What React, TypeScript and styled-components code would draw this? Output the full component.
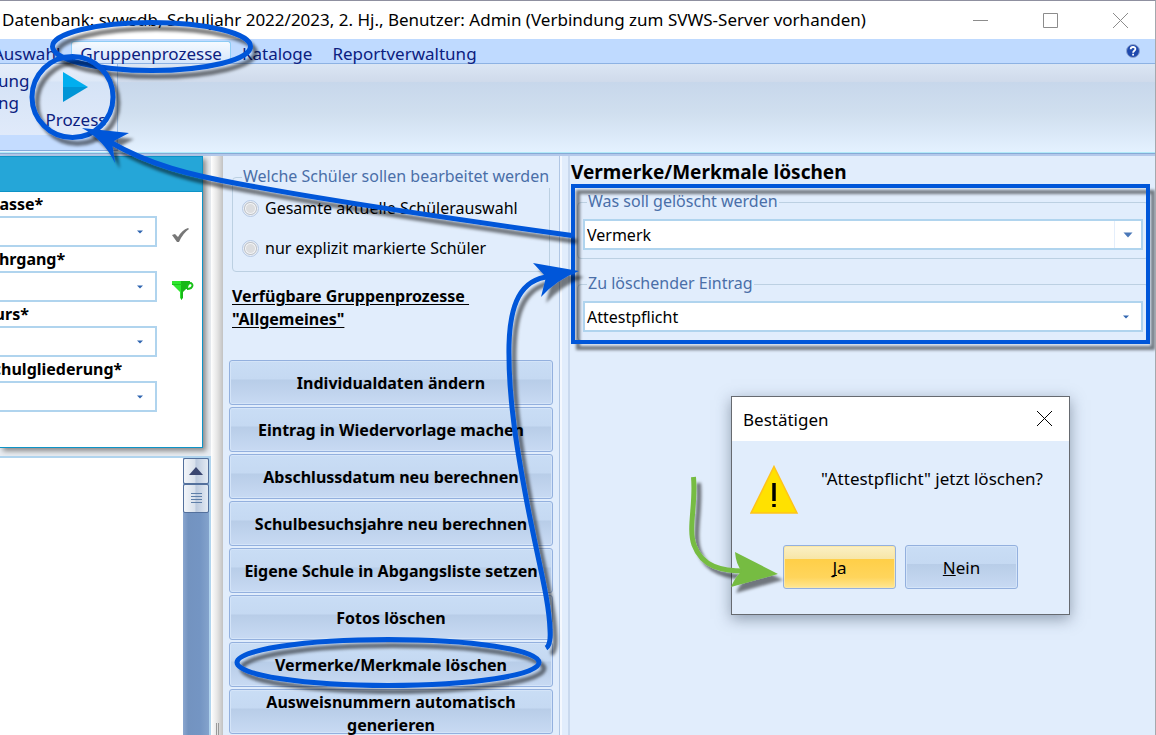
import React from 'react';
import styled, { createGlobalStyle, css } from 'styled-components';

const GlobalStyle = createGlobalStyle`
  *, *::before, *::after { box-sizing: border-box; }
  body { margin: 0; background: #e1edfc; }
  body, button, select, input { font-family: 'Noto Sans', 'Open Sans', sans-serif; }
  body { font-size: 16px; color: #000; }
  button { cursor: pointer; }
  u { text-decoration-skip-ink: none; }
`;

const Window = styled.div`
  position: relative;
  display: flex;
  flex-direction: column;
  height: 100vh;
  overflow: hidden;
  border-top: 1px solid #8f90a0;
  border-right: 1px solid #a5a8ad;
`;

const TitleBar = styled.header`
  display: flex;
  flex: none;
  align-items: center;
  height: 38px;
  background: #fff;
`;

const Title = styled.h1`
  flex: 1;
  margin: 0 0 0 2px;
  font-size: 17px;
  font-weight: 400;
  line-height: 24px;
  white-space: nowrap;
`;

const WindowButton = styled.button`
  display: flex;
  align-items: center;
  justify-content: center;
  width: 70px;
  height: 38px;
  padding: 0;
  border: 0;
  background: none;
  color: #8c8c8c;
`;

const MenuBar = styled.nav`
  display: flex;
  flex: none;
  align-items: stretch;
  gap: 2px;
  height: 25px;
  padding: 2px 0 0;
  background: #bfdaff;
  border-bottom: 1px solid #8db2e3;
`;

const MenuTab = styled.button<{ $active?: boolean; $clipped?: boolean }>`
  padding: 2px 8px 0;
  border: 1px solid transparent;
  border-bottom: 0;
  border-radius: 3px 3px 0 0;
  background: none;
  color: #0b2080;
  font-size: 17px;
  line-height: 20px;
  ${p => p.$active && css`
    border-color: #8fcdf5;
    background: linear-gradient(#f5faff, #d5e6fb);
  `}
  ${p => p.$clipped && css`margin-left: -16px;`}
`;

const HelpButton = styled.button`
  margin: 0 15px 2px auto;
  padding: 0;
  border: 0;
  background: none;
  line-height: 0;
`;

const Ribbon = styled.div`
  flex: none;
  height: 92px;
  background: linear-gradient(#dbe6f4 0, #cfdaeb 18px, #c7d7eb 18px, #d0dfef 50px, #e4f1ff 88px, #b0eaf8 88px, #b0eaf8 89px, #86aad6 89px, #86aad6 90px, #b4c8ea 90px);
`;

const RibbonGroup = styled.div`
  display: flex;
  width: 118px;
  height: 87px;
  border-right: 1px solid #9fbcdf;
  border-bottom: 1px solid #85aadb;
  background: linear-gradient(#e6eefa 0, #dde8f7 17px, #d5e3f6 18px, #e0eafa 71px, #c4dcff 71px);
`;

const RibbonLinks = styled.div`
  width: 36px;
  padding-top: 6px;
  overflow: hidden;
`;

const RibbonLink = styled.button`
  display: block;
  margin-left: -2px;
  padding: 0;
  border: 0;
  background: none;
  color: #0b2080;
  font-size: 17px;
  line-height: 22px;
`;

const RunButton = styled.button`
  display: flex;
  flex-direction: column;
  align-items: center;
  gap: 7px;
  width: 80px;
  padding: 8px 0 0;
  border: 0;
  background: none;
  color: #0b2080;
  font-size: 17px;
  line-height: 22px;
`;

const Body = styled.main`
  display: grid;
  flex: 1;
  grid-template-columns: 211px 12px 336px 11px 1fr;
  min-height: 0;
`;

const LeftColumn = styled.aside`
  display: flex;
  flex-direction: column;
  gap: 8px;
  min-width: 0;
  background: #e9edf2;
`;

const FilterPanel = styled.section`
  width: 203px;
  padding-bottom: 35px;
  border: 1px solid #0d93c6;
  border-left: 0;
  background: #fff;
  box-shadow: 3px 3px 5px #8a8a8a;
`;

const PanelHeader = styled.div`
  height: 35px;
  border-bottom: 1px solid #0d93c6;
  background: #25a6d8;
`;

const FieldClip = styled.div`
  overflow: hidden;
`;

const FilterRow = styled.div`
  display: flex;
  align-items: flex-end;
  gap: 15px;
  margin-left: -16px;
`;

const Field = styled.div`
  width: 173px;
`;

const FieldLabel = styled.label`
  display: block;
  font-weight: 700;
  line-height: 24px;
`;

const ComboFrame = styled.div`
  display: grid;
  grid-template-columns: 1fr 30px;
  height: 31px;
  border: 2px solid #b0d4ee;
  background: #fff;
`;

const ComboSelect = styled.select`
  grid-area: 1 / 1 / 2 / 3;
  width: 100%;
  padding: 0 2px;
  border: 0;
  appearance: none;
  background: none;
  color: #000;
  font-size: 16px;
`;

const ComboArrow = styled.span<{ $divided?: boolean }>`
  display: flex;
  grid-area: 1 / 2;
  align-items: center;
  justify-content: center;
  pointer-events: none;
  ${p => p.$divided && css`
    margin-left: 3px;
    border-left: 1px solid #e4eefb;
  `}
`;

const FilterIcon = styled.span`
  display: flex;
  align-items: center;
  height: 24px;
`;

const ListPane = styled.section`
  display: flex;
  flex: 1;
  justify-content: flex-end;
  border: solid #b0d4ee;
  border-width: 2px 2px 0 0;
  background: #fff;
`;

const ScrollTrack = styled.div`
  display: flex;
  flex-direction: column;
  width: 26px;
  background: linear-gradient(90deg, #8aa6cf, #7393c0 20%, #7495c3 65%, #84a3cc);
`;

const ScrollPart = styled.button<{ $tall?: boolean }>`
  display: flex;
  align-items: center;
  justify-content: center;
  height: ${p => (p.$tall ? 29 : 26)}px;
  padding: 0;
  border: 1px solid #53709c;
  border-radius: 2px;
  background: linear-gradient(90deg, #f2f5f9, #d9e1ec 45%, #bccade 50%, #e3eaf3);
`;

const LeftSplitter = styled.div`
  display: flex;
  align-items: flex-end;
  justify-content: center;
  background: linear-gradient(90deg, #fff, #e6e6e6 50%, #c2c2c2);
`;

const Grip = styled.span`
  width: 3px;
  height: 12px;
  border: solid #999;
  border-width: 0 1px;
`;

const MiddleSplitter = styled.div`
  border: solid #b0c6e4;
  border-width: 0 2px 0 1px;
  border-right-color: #c9d9ee;
  box-shadow: inset 2px 0 #f4f8fe;
`;

const ProcessColumn = styled.section`
  display: flex;
  flex-direction: column;
  padding: 10px 6px 0;
`;

const GroupBox = styled.fieldset<{ $scope?: boolean }>`
  min-width: 0;
  margin: 0;
  border: 1px solid #bcd0e2;
  border-radius: 4px;
  padding: 6px 5px 8px;
  ${p => p.$scope && css`
    margin: 0 3px;
    padding: 0 5px 3px;
  `}
`;

const Legend = styled.legend`
  margin-left: 4px;
  padding: 0 1px 2px;
  background: #e1edfc;
  color: #4a6fa8;
  line-height: 20px;
  white-space: nowrap;
`;

const RadioLabel = styled.label`
  display: flex;
  align-items: center;
  gap: 6px;
  height: 40px;
  padding-left: 4px;
  white-space: nowrap;
`;

const Radio = styled.input`
  width: 17px;
  height: 17px;
  margin: 0;
  appearance: none;
  border: 1px solid #b6c9e4;
  border-radius: 50%;
  background: radial-gradient(circle, #dcdddf 0 4px, #f2f3f5 5px, #bfc3c9 6px, #e9eef6 7px);
`;

const ListHeading = styled.h2`
  margin: 13px 3px 29px;
  font-size: 16px;
  line-height: 23px;
  text-decoration: underline;
  text-underline-offset: 2px;
  white-space: pre;
`;

const ProcessList = styled.div`
  display: flex;
  flex-direction: column;
  gap: 2px;
`;

const bevel = css`
  border: 1px solid #93b0de;
  border-radius: 3px;
  background: linear-gradient(#c9ddf5, #c5d9f2 42%, #b8cde8 44%, #c8daf3);
  box-shadow: inset 0 0 0 1px #d4e4f8;
  color: #000;
`;

const ProcessButton = styled.button`
  ${bevel}
  flex: none;
  height: 45px;
  padding: 1px 8px 0;
  font-size: 16px;
  font-weight: 700;
  line-height: 23px;
`;

const DetailColumn = styled.section`
  min-width: 0;
  padding-left: 1px;
`;

const DetailTitle = styled.h2`
  margin: 0;
  font-size: 19px;
  line-height: 32px;
`;

const DetailFields = styled.div`
  display: flex;
  flex-direction: column;
  gap: 14px;
  padding: 3px 6px 0;
`;

const Dialog = styled.div`
  position: absolute;
  top: 395px;
  left: 731px;
  width: 339px;
  border: 1px solid #666a70;
  background: #e1edfc;
  box-shadow: 0 4px 14px rgba(60, 75, 100, 0.5);
`;

const DialogHeader = styled.div`
  display: flex;
  align-items: center;
  justify-content: space-between;
  height: 44px;
  padding-left: 11px;
  background: #fff;
  font-size: 17px;
`;

const DialogClose = styled.button`
  width: 50px;
  height: 44px;
  padding: 0 0 2px;
  border: 0;
  background: none;
  line-height: 0;
`;

const DialogContent = styled.div`
  display: flex;
  gap: 22px;
  padding: 24px 0 0 18px;
`;

const Message = styled.p`
  margin: 2px 0 0;
  font-size: 17px;
  line-height: 24px;
  white-space: nowrap;
`;

const DialogActions = styled.div`
  display: flex;
  gap: 9px;
  padding: 31px 0 25px 51px;
`;

const DialogButton = styled.button<{ $primary?: boolean }>`
  ${bevel}
  width: 113px;
  height: 44px;
  font-size: 17px;
  ${p => p.$primary && css`
    background: linear-gradient(#fbf0c4, #f7e6a8 30%, #ffcf48 32%, #ffd55c 75%, #ffe793);
    box-shadow: inset 0 0 0 1px #fbe7a6;
  `}
`;

const Markup = styled.svg`
  position: absolute;
  top: -1px;
  left: 0;
  pointer-events: none;
`;

const Chevron = ({ large }: { large?: boolean }) =>
  large ? (
    <svg width="10" height="6" aria-hidden="true"><path d="M0.5 0.5h9L5 5.5z" fill="#4a78b8" /></svg>
  ) : (
    <svg width="6" height="4" aria-hidden="true"><path d="M0 0.5h6L3 3.500z" fill="#2f65b0" /></svg>
  );

const CheckMark = () => (
  <svg width="17" height="14" aria-hidden="true">
    <path d="M0 7l3-1 3 3Q10 2 16 0l1 1Q11 5 7 14H5z" fill="#777" />
  </svg>
);

const Funnel = () => (
  <svg width="22" height="20" aria-hidden="true">
    <path d="M0 1h10v19l-2-2v-6L0 4z" fill="#2ee62e" />
    <path d="M9 1h9v4l-7 7v6l-2 2z" fill="#18b818" />
    <path d="M15 9Q15 3 19 3Q22 5 19 8Q17 9 15 9" fill="#fff" stroke="#18c018" strokeWidth="2" />
    <path d="M0 4.500h10" stroke="#1cc41c" />
  </svg>
);

const filters = [
  { id: 'klasse', label: 'Klasse*', icon: <CheckMark /> },
  { id: 'jahrgang', label: 'Jahrgang*', icon: <Funnel /> },
  { id: 'kurs', label: 'Kurs*' },
  { id: 'gliederung', label: 'Schulgliederung*' },
];

const processes = [
  'Individualdaten ändern',
  'Eintrag in Wiedervorlage machen',
  'Abschlussdatum neu berechnen',
  'Schulbesuchsjahre neu berechnen',
  'Eigene Schule in Abgangsliste setzen',
  'Fotos löschen',
  'Vermerke/Merkmale löschen',
  'Ausweisnummern automatisch generieren',
];

const details = [
  { legend: 'Was soll gelöscht werden', value: 'Vermerk', divided: true },
  { legend: 'Zu löschender Eintrag', value: 'Attestpflicht', divided: false },
];

export default function App() {
  return (
    <Window>
      <GlobalStyle />
      <TitleBar>
        <Title>Datenbank: svwsdb, Schuljahr 2022/2023, 2. Hj., Benutzer: Admin (Verbindung zum SVWS-Server vorhanden)</Title>
        <WindowButton aria-label="Minimieren">
          <svg width="15" height="15"><path d="M0 7.5h15" stroke="currentColor" /></svg>
        </WindowButton>
        <WindowButton aria-label="Maximieren">
          <svg width="15" height="15"><path d="M.5 .5h14v14h-14z" fill="none" stroke="currentColor" /></svg>
        </WindowButton>
        <WindowButton aria-label="Schließen">
          <svg width="15" height="15"><path d="M0 0l15 15M15 0L0 15" stroke="currentColor" /></svg>
        </WindowButton>
      </TitleBar>

      <MenuBar>
        <MenuTab $clipped>Auswahl</MenuTab>
        <MenuTab $active>Gruppenprozesse</MenuTab>
        <MenuTab>Kataloge</MenuTab>
        <MenuTab>Reportverwaltung</MenuTab>
        <HelpButton aria-label="Hilfe">
          <svg width="14" height="14">
            <circle cx="7" cy="7" r="6.5" fill="#1f49ad" stroke="#8fa5cf" />
            <path d="M4.700 5.300C4.700 2.300 9.400 2.300 9.400 5C9.400 6.800 7.100 6.700 7.100 8.700M7.100 9.800v1.700" fill="none" stroke="#fff" strokeWidth="1.800" />
          </svg>
        </HelpButton>
      </MenuBar>

      <Ribbon>
        <RibbonGroup>
          <RibbonLinks>
            <RibbonLink>ung</RibbonLink>
            <RibbonLink>ng</RibbonLink>
          </RibbonLinks>
          <RunButton>
            <svg width="26" height="30" aria-hidden="true">
              <path d="M0 0l25 15H0z" fill="#00aeef" />
              <path d="M0 15h25L0 30z" fill="#0095d6" />
            </svg>
            Prozess
          </RunButton>
        </RibbonGroup>
      </Ribbon>

      <Body>
        <LeftColumn>
          <FilterPanel>
            <PanelHeader />
            <FieldClip>
              {filters.map(f => (
                <FilterRow key={f.id}>
                  <Field>
                    <FieldLabel htmlFor={f.id}>{f.label}</FieldLabel>
                    <ComboFrame>
                      <ComboSelect id={f.id}><option value="" /></ComboSelect>
                      <ComboArrow><Chevron /></ComboArrow>
                    </ComboFrame>
                  </Field>
                  {f.icon && <FilterIcon>{f.icon}</FilterIcon>}
                </FilterRow>
              ))}
            </FieldClip>
          </FilterPanel>
          <ListPane>
            <ScrollTrack>
              <ScrollPart aria-label="Nach oben">
                <svg width="14" height="8"><path d="M0 8l7-8 7 8z" fill="#3a4670" /></svg>
              </ScrollPart>
              <ScrollPart $tall aria-label="Bildlauf">
                <svg width="11" height="11"><path d="M0 .5h11M0 3.500h11M0 6.500h11M0 9.500h11" stroke="#5f7fa8" /></svg>
              </ScrollPart>
            </ScrollTrack>
          </ListPane>
        </LeftColumn>

        <LeftSplitter><Grip /></LeftSplitter>

        <ProcessColumn>
          <GroupBox $scope>
            <Legend>Welche Schüler sollen bearbeitet werden</Legend>
            <RadioLabel><Radio type="radio" name="scope" />Gesamte aktuelle Schülerauswahl</RadioLabel>
            <RadioLabel><Radio type="radio" name="scope" />nur explizit markierte Schüler</RadioLabel>
          </GroupBox>
          <ListHeading>{'Verfügbare Gruppenprozesse \n"Allgemeines"'}</ListHeading>
          <ProcessList>
            {processes.map(p => <ProcessButton key={p}>{p}</ProcessButton>)}
          </ProcessList>
        </ProcessColumn>

        <MiddleSplitter />

        <DetailColumn>
          <DetailTitle>Vermerke/Merkmale löschen</DetailTitle>
          <DetailFields>
            {details.map(d => (
              <GroupBox key={d.legend}>
                <Legend>{d.legend}</Legend>
                <ComboFrame>
                  <ComboSelect aria-label={d.legend}><option>{d.value}</option></ComboSelect>
                  <ComboArrow $divided={d.divided}><Chevron large={d.divided} /></ComboArrow>
                </ComboFrame>
              </GroupBox>
            ))}
          </DetailFields>
        </DetailColumn>
      </Body>

      <Dialog role="dialog" aria-label="Bestätigen">
        <DialogHeader>
          Bestätigen
          <DialogClose aria-label="Schließen">
            <svg width="15" height="15"><path d="M0 0l15 15M15 0L0 15" stroke="#000" /></svg>
          </DialogClose>
        </DialogHeader>
        <DialogContent>
          <svg width="49" height="49" aria-hidden="true">
            <path d="M24 1.500L47 48H1z" fill="#ffe100" stroke="#ffc31a" strokeWidth="1.500" />
            <path d="M24 18v18M24 39v3" stroke="#000" strokeWidth="3.500" />
          </svg>
          <Message>"Attestpflicht" jetzt löschen?</Message>
        </DialogContent>
        <DialogActions>
          <DialogButton $primary><u>J</u>a</DialogButton>
          <DialogButton><u>N</u>ein</DialogButton>
        </DialogActions>
      </Dialog>

      <Markup width="1156" height="735" aria-hidden="true">
        <defs>
          <filter id="shade" filterUnits="userSpaceOnUse" x="0" y="0" width="1156" height="735">
            <feDropShadow dx="5" dy="6" stdDeviation="1.500" floodColor="#000" floodOpacity="0.5" />
          </filter>
        </defs>
        <g fill="none" stroke="#0057d9" strokeWidth="4">
          <ellipse cx="151.500" cy="46.500" rx="99" ry="24" strokeWidth="5" filter="url(#shade)" />
          <circle cx="72.500" cy="97" r="40.500" strokeWidth="5" filter="url(#shade)" />
          <ellipse cx="388" cy="662.500" rx="151" ry="23" strokeWidth="5" filter="url(#shade)" />
          <rect x="573" y="186" width="575" height="156" filter="url(#shade)" />
          <g filter="url(#shade)">
            <path d="M572 235.500C460 220 330 201 240 184C190 175 150 165 110 142" strokeWidth="5" />
            <path d="M82 128L129 133L112 142L115 163Q104 140 82 128z" fill="#0057d9" stroke="none" />
          </g>
          <g filter="url(#shade)">
            <path d="M546 648Q551 645 550 630C549 600 540 570 527 503C518 455 508 400 509 345C510 305 520 279 550 276.500" strokeWidth="5" />
            <path d="M579 271L533 263L546 277L541 297Q556 280 579 271z" fill="#0057d9" stroke="none" />
          </g>
        </g>
        <g filter="url(#shade)">
          <path d="M693.500 477C696 505 688 528 694 545C702 567 722 571 745 571" fill="none" stroke="#76bc43" strokeWidth="5" />
          <path d="M778 574L735 552Q736 565 742 571Q735 577 731 587z" fill="#76bc43" />
        </g>
      </Markup>
    </Window>
  );
}
